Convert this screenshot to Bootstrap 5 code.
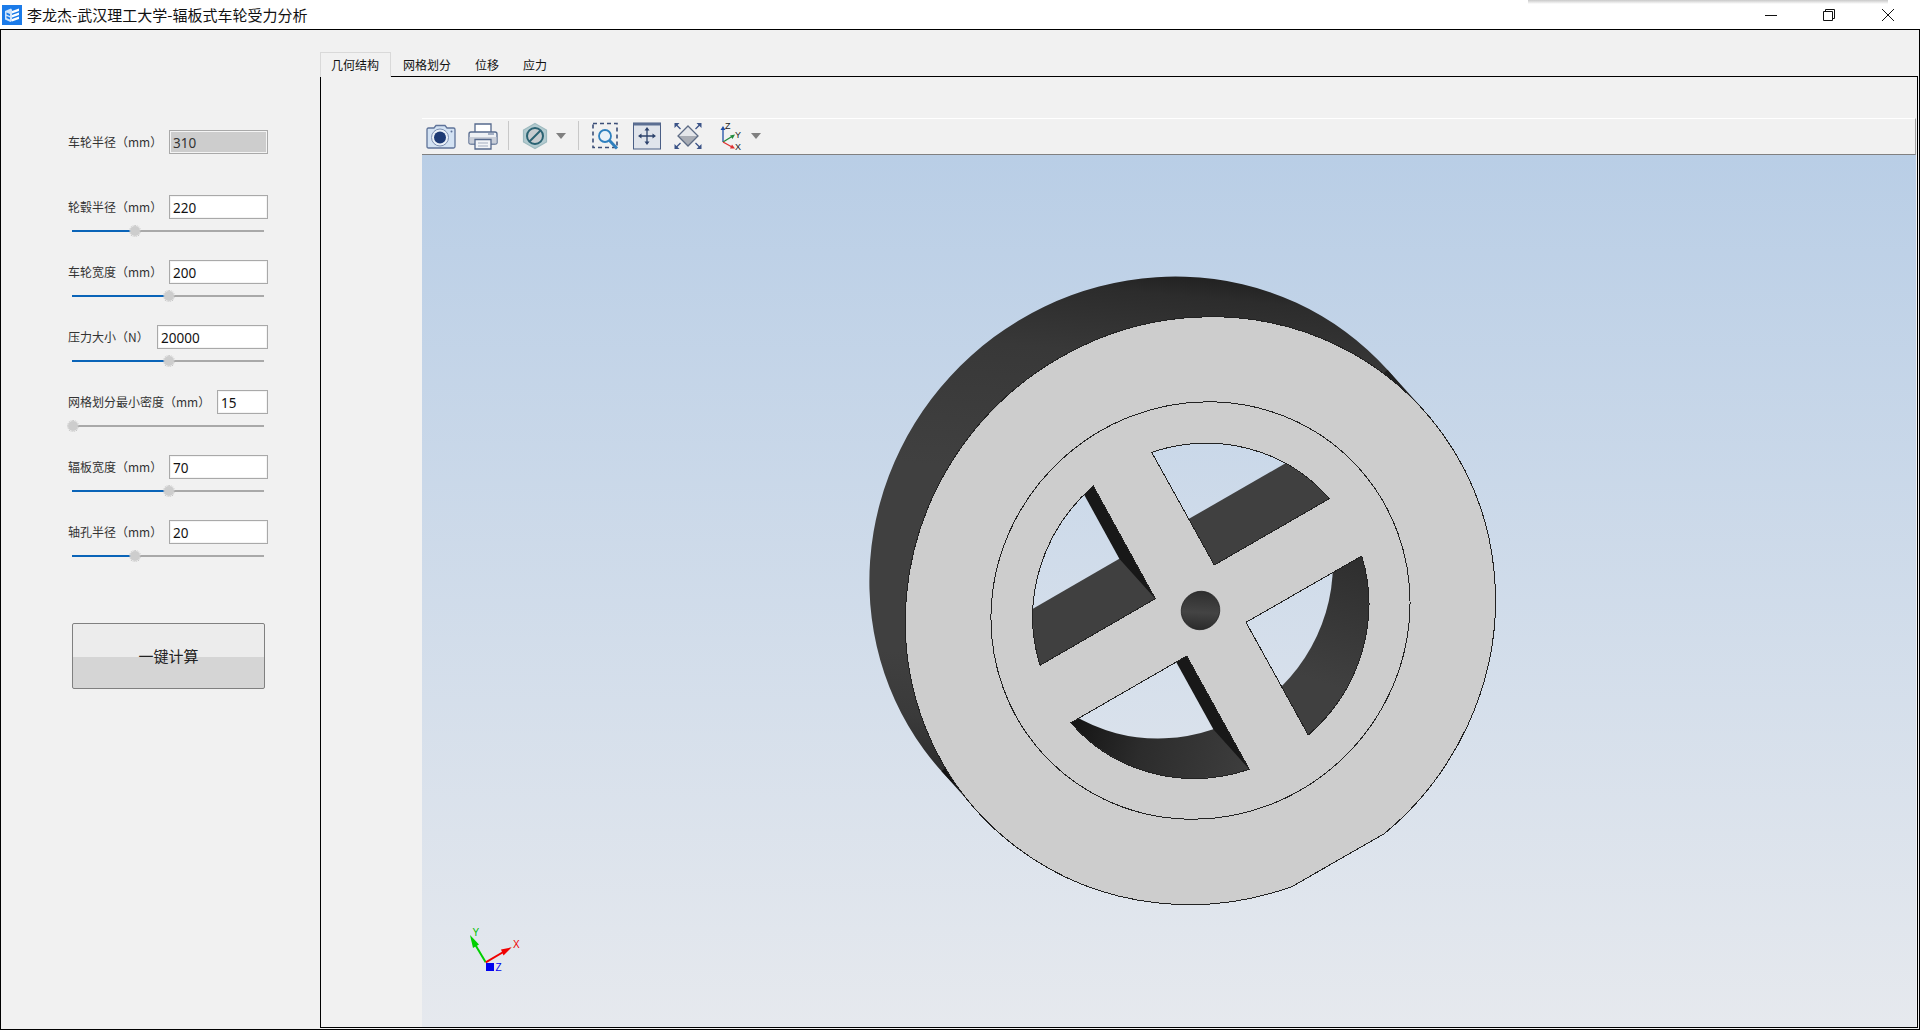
<!DOCTYPE html>
<html lang="zh-CN">
<head>
    <meta charset="UTF-8">
    <meta name="viewport" content="width=device-width, initial-scale=1.0">
    <title>李龙杰-武汉理工大学-辐板式车轮受力分析</title>
    <link href="https://cdn.jsdelivr.net/npm/bootstrap@5.3.2/dist/css/bootstrap.min.css" rel="stylesheet">
    <style>
        html, body { height: 100%; }
        body {
            background: #fff;
            color: #222;
            overflow: hidden;
            font-family: "Noto Sans CJK SC", "Noto Sans", sans-serif;
            font-size: 12px;
        }
        /* title bar */
        .title-strip { height: 29px; position: relative; background: #fff; }
        .title-logo { margin: 0 5px 0 2px; display: block; }
        .title-text { font-size: 15px; color: #111; line-height: 28px; }
        .win-btn { width: 58.5px; display: flex; justify-content: center; }
        .win-shadow {
            position: absolute; left: 1528px; top: 0; width: 360px; height: 4px;
            background: linear-gradient(#c9c9c9, #fff);
        }
        /* main frame */
        .app-frame {
            height: 1001px;
            background: #f1f1f1;
            border: 1px solid #000;
        }
        .side-panel { width: 319px; flex: none; padding-top: 100px; }
        .param-field { height: 65px; padding-left: 67px; width: 267px; }
        .param-label { color: #333; white-space: nowrap; }
        .param-input.form-control {
            height: 24px; padding: 1px 0 0 3px; font-size: 13.5px; line-height: 20px;
            font-family: "Noto Sans", sans-serif;
            color: #111; border: 1px solid #a9a9a9; border-radius: 0;
            box-shadow: inset 0 0 0 1px #f4f4f4;
        }
        .param-input.form-control:disabled { background: #cdcdcd; color: #333; opacity: 1; }
        .input-w99 { width: 99px; flex: none; }
        .input-w111 { width: 111px; flex: none; }
        .input-w51 { width: 51px; flex: none; }
        .slide-track {
            position: relative; height: 2px; width: 192px;
            margin: 11px 0 0 4px; background: #a9a9a9;
        }
        .slide-fill { height: 100%; background: #0a64b8; }
        .slide-knob {
            position: absolute; top: -4px; width: 10px; height: 10px; margin-left: -5px;
            border-radius: 50%; background: #cdcdcd; outline: 1px dotted #c4c4c4;
        }
        .calc-btn.btn {
            display: block; width: 193px; height: 66px; margin: 38px 0 0 71px; padding: 0;
            font-size: 15px; color: #222; border: 1px solid #808080; border-radius: 2px;
            background: linear-gradient(#ececec 0, #ececec 51%, #d5d5d5 51%, #d5d5d5 100%);
        }
        /* tabs */
        .tab-column { flex: 1; min-width: 0; padding: 22px 1px 1px 0; }
        .tab-strip.nav-tabs { border: 0; height: 24px; flex-wrap: nowrap; }
        .tab-strip .nav-link {
            height: 25px; padding: 0 11px; font-size: 12px; line-height: 23px; color: #111;
            background: transparent; border: 1px solid transparent; border-radius: 0;
        }
        .tab-strip .nav-link.active {
            padding-left: 10px;
            background: #f1f1f1; color: #111; border-color: #d9d9d9; border-bottom: 0;
            position: relative; z-index: 1;
        }
        .tab-body {
            flex: 1; min-height: 0; border: 1px solid #000;
            padding: 41px 1px 0 101px;
        }
        .tool-strip {
            height: 37px; flex: none; padding: 0 0 2px 2px; background: #f1f1f1;
            border-top: 1px solid #fff; border-right: 1px solid #a0a0a0; border-bottom: 1px solid #808080;
        }
        .tool-btn { width: 34px; height: 30px; display: block; flex: none; }
        .gap-next { margin-left: 7.5px; }
        .gap-tight { margin-left: 5.5px; }
        .tool-sep { width: 1px; height: 29px; background: #c8c8c8; flex: none; }
        .sep-a { margin: 0 9px 0 8.5px; }
        .sep-b { margin: 0 9px 0 12px; }
        .tool-caret {
            width: 0; height: 0; flex: none; margin-left: 4px;
            border-left: 5.5px solid transparent; border-right: 5.5px solid transparent;
            border-top: 6px solid #808080;
        }
        .caret-far { margin-left: 6px; }
        .view-pane { flex: 1; min-height: 0; background: #dfe5ee; }
        .view-pane svg { display: block; width: 100%; height: 100%; }
        .edge-line { fill: none; stroke: #222; stroke-width: 1; shape-rendering: crispEdges; }
        .triad-label { font-family: "Liberation Sans", sans-serif; font-size: 10px; }
        .axis-label { font-family: "Liberation Sans", sans-serif; font-size: 9px; fill: #222; }
    </style>
</head>
<body>
    <div class="title-strip d-flex align-items-center">
        <svg class="title-logo" width="20" height="20" viewBox="0 0 20 20">
            <rect width="20" height="20" fill="#1b7be9"/>
            <path d="M3 6 9 3.5 10 4.5 10 16 8.5 17 3 14.5Z" fill="#cfe4fb"/>
            <path d="M4.5 7.5 8 9v2L4.5 9.5ZM4.5 11 8 12.5v2L4.5 13Z" fill="#1b7be9"/>
            <path d="M10 6 17 3.5V6L10 8.5ZM10 10 17 7.5V10L10 12.5ZM10 14 17 11.500V14L10 16.500Z" fill="#fff"/>
        </svg>
        <span class="title-text">李龙杰-武汉理工大学-辐板式车轮受力分析</span>
        <div class="win-shadow"></div>
        <div class="ms-auto d-flex align-items-center" style="padding-right:3px">
            <div class="win-btn">
                <svg width="14" height="14" viewBox="0 0 14 14"><path d="M1 7.500H13" stroke="#111" fill="none"/></svg>
            </div>
            <div class="win-btn">
                <svg width="14" height="14" viewBox="0 0 14 14"><path d="M1.500 3.500H10.500V12.500H1.500ZM3.500 3.500V1.500H12.500V10.500H10.500" stroke="#111" fill="none"/></svg>
            </div>
            <div class="win-btn">
                <svg width="14" height="14" viewBox="0 0 14 14"><path d="M1 1 13 13M13 1 1 13" stroke="#111" fill="none"/></svg>
            </div>
        </div>
    </div>

    <div class="app-frame d-flex">
        <div class="side-panel">
            <div class="param-field">
                <div class="d-flex justify-content-between align-items-center">
                    <label class="param-label">车轮半径（mm）</label>
                    <input class="form-control param-input input-w99" value="310" disabled>
                </div>
            </div>
            <div class="param-field">
                <div class="d-flex justify-content-between align-items-center">
                    <label class="param-label">轮毂半径（mm）</label>
                    <input class="form-control param-input input-w99" value="220">
                </div>
                <div class="slide-track"><div class="slide-fill" style="width:33%"></div><div class="slide-knob" style="left:33%"></div></div>
            </div>
            <div class="param-field">
                <div class="d-flex justify-content-between align-items-center">
                    <label class="param-label">车轮宽度（mm）</label>
                    <input class="form-control param-input input-w99" value="200">
                </div>
                <div class="slide-track"><div class="slide-fill" style="width:50.500%"></div><div class="slide-knob" style="left:50.500%"></div></div>
            </div>
            <div class="param-field">
                <div class="d-flex justify-content-between align-items-center">
                    <label class="param-label">压力大小（N）</label>
                    <input class="form-control param-input input-w111" value="20000">
                </div>
                <div class="slide-track"><div class="slide-fill" style="width:50.500%"></div><div class="slide-knob" style="left:50.500%"></div></div>
            </div>
            <div class="param-field">
                <div class="d-flex justify-content-between align-items-center">
                    <label class="param-label">网格划分最小密度（mm）</label>
                    <input class="form-control param-input input-w51" value="15">
                </div>
                <div class="slide-track"><div class="slide-fill" style="width:0.500%"></div><div class="slide-knob" style="left:0.500%"></div></div>
            </div>
            <div class="param-field">
                <div class="d-flex justify-content-between align-items-center">
                    <label class="param-label">辐板宽度（mm）</label>
                    <input class="form-control param-input input-w99" value="70">
                </div>
                <div class="slide-track"><div class="slide-fill" style="width:50.500%"></div><div class="slide-knob" style="left:50.500%"></div></div>
            </div>
            <div class="param-field">
                <div class="d-flex justify-content-between align-items-center">
                    <label class="param-label">轴孔半径（mm）</label>
                    <input class="form-control param-input input-w99" value="20">
                </div>
                <div class="slide-track"><div class="slide-fill" style="width:33%"></div><div class="slide-knob" style="left:33%"></div></div>
            </div>
            <button type="button" class="btn calc-btn">一键计算</button>
        </div>

        <div class="tab-column d-flex flex-column">
            <ul class="nav nav-tabs tab-strip">
                <li class="nav-item"><a class="nav-link active" href="#">几何结构</a></li>
                <li class="nav-item"><a class="nav-link" href="#">网格划分</a></li>
                <li class="nav-item"><a class="nav-link" href="#">位移</a></li>
                <li class="nav-item"><a class="nav-link" href="#">应力</a></li>
            </ul>
            <div class="tab-body d-flex flex-column">
                <div class="tool-strip d-flex align-items-center">
                    <!-- camera -->
                    <svg class="tool-btn" viewBox="0 0 34 30">
                        <path d="M4.500 7H10L12 4.500H21L23 7H29.500Q31 7 31 8.500V25.500Q31 27 29.500 27H4.500Q3 27 3 25.500V8.500Q3 7 4.500 7Z" fill="#d3e2f3" stroke="#5f7399" stroke-width="1.300"/>
                        <circle cx="16" cy="16.500" r="8.500" fill="#e9f0f8" stroke="#7c8fb0"/>
                        <circle cx="16" cy="16.500" r="6" fill="#1d3a74"/>
                        <circle cx="27.500" cy="10.500" r="1" fill="#5f7399"/>
                    </svg>
                    <!-- printer -->
                    <svg class="tool-btn gap-next" viewBox="0 0 34 30">
                        <path d="M9 11V3H25V11" fill="#fff" stroke="#55698d" stroke-width="1.300"/>
                        <path d="M5 11H29Q31 11 31 13V22Q31 23 29 23H5Q3 23 3 22V13Q3 11 5 11Z" fill="#eef1f5" stroke="#55698d" stroke-width="1.300"/>
                        <path d="M3.500 16H30.500V22.500H3.500Z" fill="#c9ced8"/>
                        <path d="M22 13H28" stroke="#8a99b3" stroke-width="1.500"/>
                        <path d="M9 18.500H25V28H9Z" fill="#f2f4f7" stroke="#55698d" stroke-width="1.300"/>
                        <path d="M12 22H22M12 25H22" stroke="#a3adbf"/>
                    </svg>
                    <div class="tool-sep sep-a"></div>
                    <!-- display mode -->
                    <svg class="tool-btn" viewBox="0 0 34 30">
                        <path d="M17 2.500 28.500 9V21L17 27.500 5.500 21V9Z" fill="#b3cbd0" stroke="#9dbabf" stroke-width="1.200"/>
                        <circle cx="17" cy="15" r="8" fill="#c8cdd0" stroke="#2b6373" stroke-width="2"/>
                        <path d="M11.500 20.500 22.500 9.500" stroke="#2b6373" stroke-width="2"/>
                    </svg>
                    <div class="tool-caret"></div>
                    <div class="tool-sep sep-b"></div>
                    <!-- zoom box -->
                    <svg class="tool-btn" viewBox="0 0 34 30">
                        <rect x="5" y="2.500" width="24" height="24" fill="none" stroke="#3c4f78" stroke-width="1.600" stroke-dasharray="4 3"/>
                        <circle cx="17" cy="15" r="6" fill="#eaf1f8" stroke="#2f80bf" stroke-width="1.800"/>
                        <path d="M21.500 19.500 29 27.500" stroke="#2f80bf" stroke-width="3"/>
                    </svg>
                    <!-- pan -->
                    <svg class="tool-btn gap-next" viewBox="0 0 34 30">
                        <rect x="3.500" y="2" width="27" height="26" fill="#e0e4eb" stroke="#4a5e85"/>
                        <rect x="3.500" y="2" width="27" height="2.500" fill="#5b6e92"/>
                        <path d="M17 8V22M10 15H24" stroke="#2d426c" stroke-width="1.300"/>
                        <path d="M17 6 19.500 9.500H14.500ZM17 24 14.500 20.500H19.500ZM8 15 11.500 12.500V17.500ZM26 15 22.500 17.500V12.500Z" fill="#2d426c"/>
                    </svg>
                    <!-- fit all -->
                    <svg class="tool-btn gap-next" viewBox="0 0 34 30">
                        <path d="M17 5 27 15 17 25 7 15Z" fill="#e4e6ea"/>
                        <path d="M7 15H27L17 25Z" fill="#a9adb5"/>
                        <path d="M17 5 27 15 17 25 7 15Z" fill="none" stroke="#5d6b84" stroke-width="1.300"/>
                        <path d="M5 3.500 9.500 8M29 3.500 24.500 8M5 26.500 9.500 22M29 26.500 24.500 22" stroke="#3c5488" stroke-width="1.300"/>
                        <path d="M3.500 2H8.500L3.500 7ZM30.500 2V7L25.500 2ZM3.500 28V23L8.500 28ZM30.500 28H25.500L30.500 23Z" fill="#3c5488"/>
                    </svg>
                    <!-- axis orientation -->
                    <svg class="tool-btn gap-tight" viewBox="0 0 34 30">
                        <path d="M12 21V8" stroke="#2050a8" stroke-width="1.300"/>
                        <path d="M12 5 14.500 9H9.500Z" fill="#2050a8"/>
                        <path d="M12 21 21 15.500" stroke="#1f8a3a" stroke-width="1.300"/>
                        <path d="M24 13.500 21.500 18 19 14.500Z" fill="#1f8a3a"/>
                        <path d="M12 21 21 26" stroke="#e03030" stroke-width="1.300"/>
                        <path d="M24 27.500 19 27.500 21 23.500Z" fill="#e03030"/>
                        <text class="axis-label" x="14" y="8">Z</text>
                        <text class="axis-label" x="24" y="17">Y</text>
                        <text class="axis-label" x="24" y="29">X</text>
                    </svg>
                    <div class="tool-caret caret-far"></div>
                </div>
                <div class="view-pane">
                    <svg viewBox="422 155 1494 872" preserveAspectRatio="none">
                        <defs>
                            <linearGradient id="skyFill" gradientUnits="userSpaceOnUse" x1="0" y1="155" x2="0" y2="1027">
                                <stop offset="0" stop-color="#b9cee6"/>
                                <stop offset="1" stop-color="#e6e9ee"/>
                            </linearGradient>
                            <linearGradient id="rimFill" gradientUnits="userSpaceOnUse" x1="960" y1="800" x2="1422" y2="369.500">
                                <stop offset="0" stop-color="#101010"/>
                                <stop offset="0.1" stop-color="#262626"/>
                                <stop offset="0.22" stop-color="#3a3a3a"/>
                                <stop offset="0.32" stop-color="#404040"/>
                                <stop offset="0.62" stop-color="#404040"/>
                                <stop offset="0.82" stop-color="#383838"/>
                                <stop offset="0.92" stop-color="#2c2c2c"/>
                                <stop offset="0.97" stop-color="#1c1c1c"/>
                                <stop offset="1" stop-color="#101010"/>
                            </linearGradient>
                            <linearGradient id="wallRight" gradientUnits="userSpaceOnUse" x1="1360" y1="556" x2="1300" y2="735">
                                <stop offset="0" stop-color="#2e2e2e"/>
                                <stop offset="0.7" stop-color="#404040"/>
                            </linearGradient>
                            <linearGradient id="wallBottom" gradientUnits="userSpaceOnUse" x1="1071" y1="722" x2="1250" y2="770">
                                <stop offset="0" stop-color="#141414"/>
                                <stop offset="0.4" stop-color="#2c2c2c"/>
                                <stop offset="1" stop-color="#3e3e3e"/>
                            </linearGradient>
                            <linearGradient id="holeFill" gradientUnits="userSpaceOnUse" x1="1186" y1="624" x2="1214" y2="596">
                                <stop offset="0" stop-color="#2a2a2a"/>
                                <stop offset="0.45" stop-color="#444"/>
                                <stop offset="1" stop-color="#2e2e2e"/>
                            </linearGradient>
                            <path id="openTR" d="M1151.700 452.300A170.800 164.500 -42 0 1 1329.300 498.700L1214.300 565Z"/>
                            <path id="openR" d="M1361.700 556A170.800 164.500 -42 0 1 1308.300 735L1246 622.300Z"/>
                            <path id="openB" d="M1249.300 769.300A170.800 164.500 -42 0 1 1071 722.700L1186.700 656Z"/>
                            <path id="openL" d="M1040 665.300A170.800 164.500 -42 0 1 1093.300 486L1155.300 598.700Z"/>
                            <clipPath id="cutTR"><use href="#openTR"/></clipPath>
                            <clipPath id="cutR"><use href="#openR"/></clipPath>
                            <clipPath id="cutB"><use href="#openB"/></clipPath>
                            <clipPath id="cutL"><use href="#openL"/></clipPath>
                        </defs>

                        <rect x="422" y="155" width="1494" height="872" fill="url(#skyFill)"/>

                        <!-- wheel rim going back, the disc is a tilted ellipse in this view -->
                        <ellipse cx="1164.500" cy="570.500" rx="300" ry="289" transform="rotate(-42 1164.500 570.500)" fill="url(#rimFill)"/>
                        <path d="M1387.500 369.800 1423.500 409.800 977.500 811.200 941.500 771.200Z" fill="url(#rimFill)"/>

                        <!-- front face -->
                        <path d="M1384 833.900 1291.900 886.600A300 289 -42 1 1 1384 833.900Z" fill="#cdcdcd"/>
                        <path class="edge-line" d="M1384 833.900 1291.900 886.600A300 289 -42 1 1 1384 833.900Z"/>
                        <ellipse class="edge-line" cx="1200.500" cy="610.500" rx="213" ry="205.200" transform="rotate(-42 1200.500 610.500)"/>

                        <!-- spoke openings: wall first, then what shows through -->
                        <use href="#openTR" fill="#404040"/>
                        <g clip-path="url(#cutTR)">
                            <use href="#openTR" transform="translate(-36 -40)" fill="url(#skyFill)"/>
                        </g>

                        <use href="#openR" fill="url(#wallRight)"/>
                        <g clip-path="url(#cutR)">
                            <use href="#openR" transform="translate(-36 -40)" fill="url(#skyFill)"/>
                        </g>

                        <use href="#openB" fill="url(#wallBottom)"/>
                        <g clip-path="url(#cutB)">
                            <path d="M1186.700 656 1249.300 769.300 1213.300 729.300 1150.700 616Z" fill="#181818"/>
                            <use href="#openB" transform="translate(-36 -40)" fill="url(#skyFill)"/>
                        </g>

                        <use href="#openL" fill="#404040"/>
                        <g clip-path="url(#cutL)">
                            <path d="M1093.300 486 1155.300 598.700 1119.300 558.700 1057.300 446Z" fill="#181818"/>
                            <use href="#openL" transform="translate(-36 -40)" fill="url(#skyFill)"/>
                        </g>

                        <!-- outlines of the openings on the front face -->
                        <use href="#openTR" class="edge-line"/>
                        <use href="#openR" class="edge-line"/>
                        <use href="#openB" class="edge-line"/>
                        <use href="#openL" class="edge-line"/>

                        <ellipse cx="1200.500" cy="610.500" rx="19.600" ry="18.900" transform="rotate(-42 1200.500 610.500)" fill="url(#holeFill)" stroke="#1c1c1c" stroke-width="0.700"/>

                        <!-- triad -->
                        <path d="M485.700 962.300 473 941" stroke="#00d000" stroke-width="2"/>
                        <path d="M470 935 479 944.500 473 948Z" fill="#00d000"/>
                        <path d="M485.700 962.300 505 951" stroke="#f00000" stroke-width="2"/>
                        <path d="M511.700 947.300 503.500 955.500 501 949.500Z" fill="#f00000"/>
                        <rect x="486" y="963" width="8" height="8" fill="#0000ee"/>
                        <text class="triad-label" x="472.500" y="935.500" fill="#00c000">Y</text>
                        <text class="triad-label" x="513" y="947.500" fill="#f00000">X</text>
                        <text class="triad-label" x="495.500" y="971" fill="#0000ee">Z</text>
                    </svg>
                </div>
            </div>
        </div>
    </div>

    <script src="https://cdn.jsdelivr.net/npm/bootstrap@5.3.2/dist/js/bootstrap.bundle.min.js"></script>
</body>
</html>
